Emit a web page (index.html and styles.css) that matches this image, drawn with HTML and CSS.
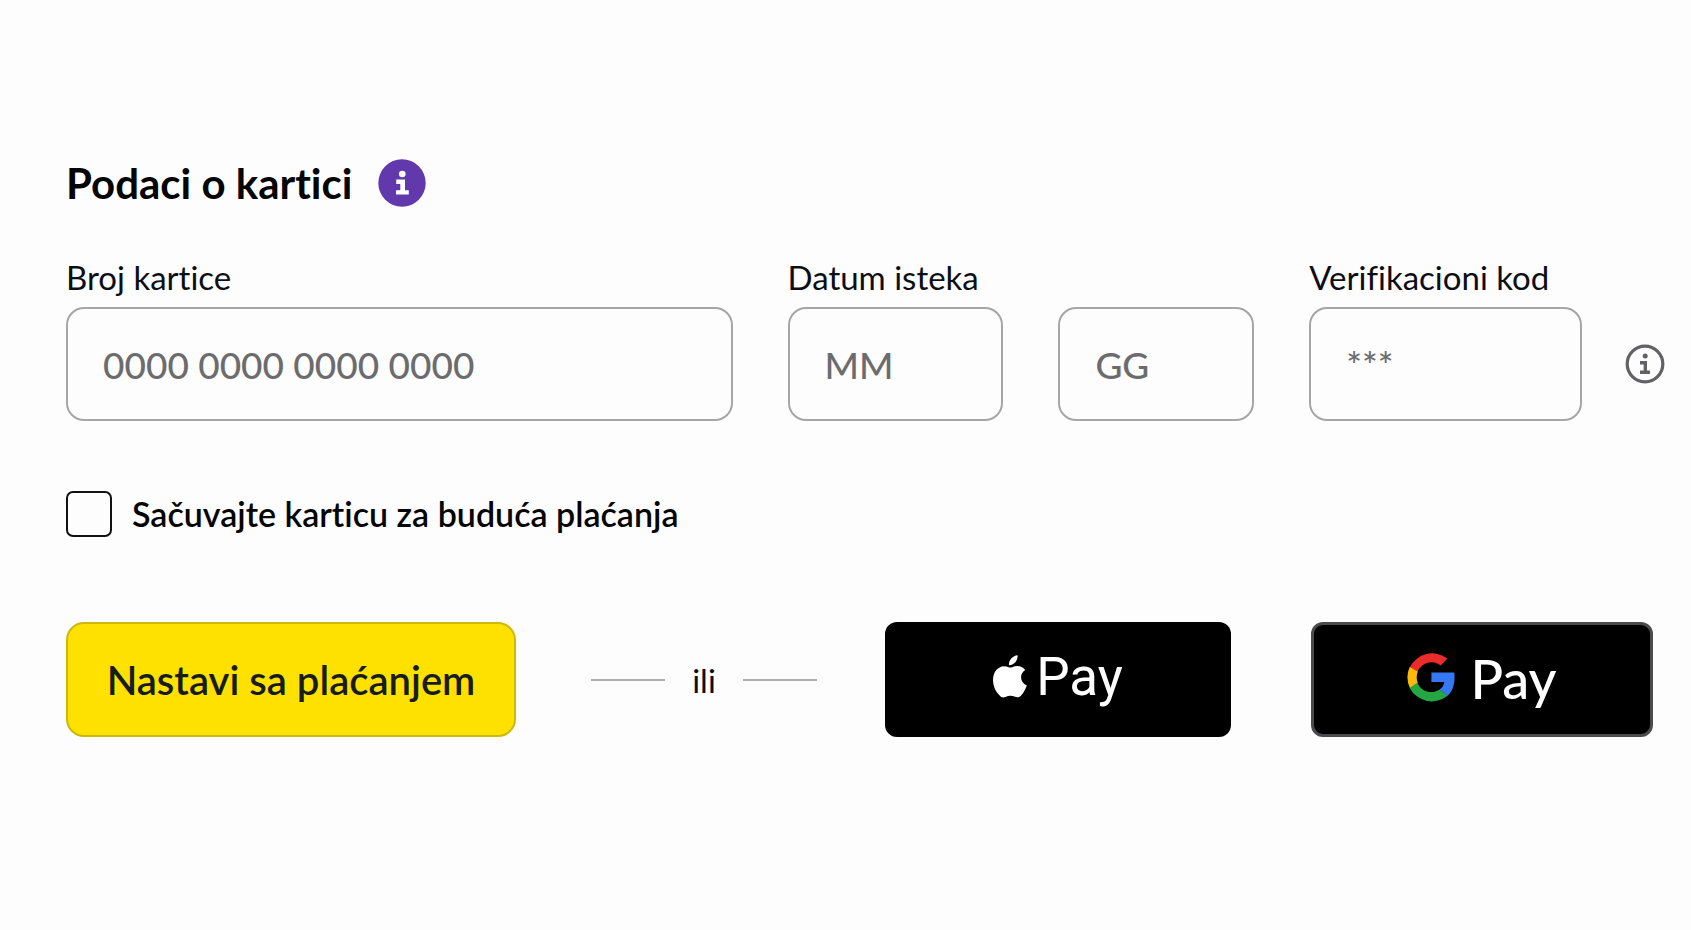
FILE: index.html
```html
<!DOCTYPE html>
<html lang="sr-Latn">
<head>
<meta charset="utf-8">
<meta name="viewport" content="width=device-width, initial-scale=1">
<title>Podaci o kartici</title>
<link rel="stylesheet" href="styles.css">
</head>
<body>
<main class="payment">
  <form class="payment-form">
    <header class="heading">
      <h1 class="title">Podaci o kartici</h1>
      <button class="info-button" type="button" aria-label="Informacije o kartici">
        <svg class="info-filled" viewBox="0 0 48 48" aria-hidden="true">
          <circle cx="24" cy="24" r="23.7" fill="#6239ac"/>
          <circle cx="24.3" cy="15" r="3.3" fill="#fff"/>
          <path d="M18.2 20.6h8.8v10.6h3.8v4.4H18v-4.4h4.3v-6.2h-4.1z" fill="#fff"/>
        </svg>
      </button>
    </header>

    <div class="fields">
      <div class="field">
        <label class="label" for="number">Broj kartice</label>
        <input class="input" id="number" type="text" inputmode="numeric" placeholder="0000 0000 0000 0000">
      </div>
      <div class="field">
        <label class="label" for="month">Datum isteka</label>
        <input class="input" id="month" type="text" inputmode="numeric" placeholder="MM">
      </div>
      <div class="field">
        <input class="input" id="year" type="text" inputmode="numeric" placeholder="GG" aria-label="Godina isteka">
      </div>
      <div class="field">
        <label class="label" for="code">Verifikacioni kod</label>
        <div class="code-row">
          <input class="input" id="code" type="text" inputmode="numeric" placeholder="***">
          <button class="info-button" type="button" aria-label="Informacije o kodu">
            <svg class="info-outline" viewBox="0 0 40 40" aria-hidden="true">
              <circle cx="20" cy="20" r="17.8" fill="none" stroke="#626166" stroke-width="3.2"/>
              <circle cx="20.2" cy="12" r="2.5" fill="#626166"/>
              <path d="M15 17h7v9.600h3V30H15v-3.400h3.600v-6.200H15z" fill="#626166"/>
            </svg>
          </button>
        </div>
      </div>
    </div>

    <label class="save">
      <input class="checkbox" type="checkbox">
      <span>Sačuvajte karticu za buduća plaćanja</span>
    </label>

    <div class="actions">
      <button class="button continue" type="submit">Nastavi sa plaćanjem</button>
      <div class="divider">ili</div>
      <button class="button apple" type="button" aria-label="Apple Pay">
        <svg class="apple-logo" viewBox="0 0 34 43" aria-hidden="true">
          <path fill="#fff" d="M24.600 0.300c.4 5.200-3.500 9.800-8.600 10C15.500 5.300 19.600.9 24.600.3zM32.200 15.100c-6.200 3.700-5.200 12.600 1.600 15.300-1.300 3.700-3.200 7.100-5.500 9.800-1.700 2-3.600 2.600-6.200 1.600-3.300-1.400-6.200-1.400-9.600.1-2.500 1-4.200.5-6.100-1.700C-.3 33.500-1.800 23.500 2.200 16.600c3-4.900 8.200-6.600 12.800-4.700 1.800.8 2.900.8 4.700 0 4.600-1.900 9.600-1 12.500 3.200z"/>
        </svg>
        <span class="apple-word">Pay</span>
      </button>
      <button class="button google" type="button" aria-label="Google Pay">
        <svg class="google-logo" viewBox="0 0 48 50" aria-hidden="true">
          <path fill="#ea2d2a" d="M2.700 15.500A25 25 0 0 1 40.400 6.500L33.700 13.500A14.700 14.700 0 0 0 10.700 19.500z"/>
          <path fill="#fbb90b" d="M2.700 15.100L10.800 19.500A15.500 15.500 0 0 0 10.800 31L3 36.200A25 25 0 0 1 2.700 15.100z"/>
          <path fill="#24a642" d="M10.400 30.700A14.800 14.800 0 0 0 32.700 37.400L40.800 43.500A24.800 24.800 0 0 1 2.700 35.900z"/>
          <path fill="#3478f6" d="M24.400 20.500H47.300C48.200 29.500 46.800 38 40.800 43.700L32.600 37.500C35.500 35.600 36.800 33 37.300 30H24.400z"/>
        </svg>
        <span class="google-word">Pay</span>
      </button>
    </div>
  </form>
</main>
</body>
</html>
```
FILE: styles.css
```css
* {
  box-sizing: border-box;
}

body {
  margin: 0;
  background: #fdfdfd;
  color: #0c0e14;
  font-family: Lato, "Noto Sans", sans-serif;
  font-size: 33px;
  line-height: 40px;
  font-variant-ligatures: none;
}

button,
input {
  font: inherit;
  font-variant-ligatures: none;
}

.payment {
  padding: 159px 26px 80px 66px;
}

.heading {
  display: flex;
  align-items: center;
  gap: 26px;
}

.title {
  margin: 0;
  color: #050505;
  font-size: 42px;
  line-height: 48px;
  font-weight: 700;
}

.info-button {
  display: flex;
  flex: none;
  padding: 0;
  border: 0;
  border-radius: 50%;
  background: none;
  cursor: pointer;
}

.info-filled {
  width: 48px;
  height: 48px;
}

.info-outline {
  width: 40px;
  height: 40px;
}

.fields {
  display: grid;
  grid-template-columns: 667fr 216fr 196fr 356fr;
  align-items: end;
  column-gap: 55px;
  margin-top: 50px;
}

.field {
  min-width: 0;
}

.label {
  display: block;
  margin-bottom: 10px;
}

.input {
  display: block;
  width: 100%;
  min-width: 0;
  height: 114px;
  padding: 0 35px;
  border: 2px solid #a6a6a6;
  border-radius: 18px;
  background: transparent;
  color: #0c0e14;
  font-size: 37px;
  font-weight: 500;
}

.input::placeholder {
  color: #6c6c6e;
  opacity: 1;
}

.code-row {
  display: flex;
  align-items: center;
  gap: 43px;
}

.save {
  display: flex;
  align-items: center;
  gap: 20px;
  width: fit-content;
  margin-top: 70px;
  color: #050505;
  font-size: 34px;
  font-weight: 600;
}

.checkbox {
  appearance: none;
  flex: none;
  width: 46px;
  height: 46px;
  margin: 0;
  border: 2px solid #111;
  border-radius: 7px;
  background: transparent;
}

.checkbox:checked {
  background: #6239ac;
}

.actions {
  display: grid;
  grid-template-columns: 450fr 369fr 346fr 422fr;
  margin-top: 85px;
  padding-right: 12px;
}

.button {
  display: flex;
  align-items: center;
  justify-content: center;
  height: 115px;
  padding: 0;
  border: 0;
  border-radius: 12px;
  background: #000;
  color: #fff;
  cursor: pointer;
}

.continue {
  border: 2px solid #cdb90b;
  border-radius: 18px;
  background: #ffe100;
  color: #171c20;
  font-size: 40px;
  font-weight: 600;
}

.divider {
  display: flex;
  align-items: center;
  gap: 27px;
  padding: 0 68px 0 75px;
}

.divider::before,
.divider::after {
  content: "";
  flex: 1;
  height: 2px;
  background: #adadad;
}

.apple {
  gap: 9px;
  padding-bottom: 6px;
}

.apple-logo {
  width: 34px;
  height: 43px;
}

.apple-word {
  font-family: Roboto, sans-serif;
  font-size: 53px;
}

.google {
  gap: 15px;
  margin-left: 80px;
  padding-bottom: 6px;
  border: 3px solid #4b4b4d;
}

.google-logo {
  width: 48px;
  height: 50px;
}

.google-word {
  padding-top: 4px;
  font-size: 54px;
  font-weight: 500;
}
```
